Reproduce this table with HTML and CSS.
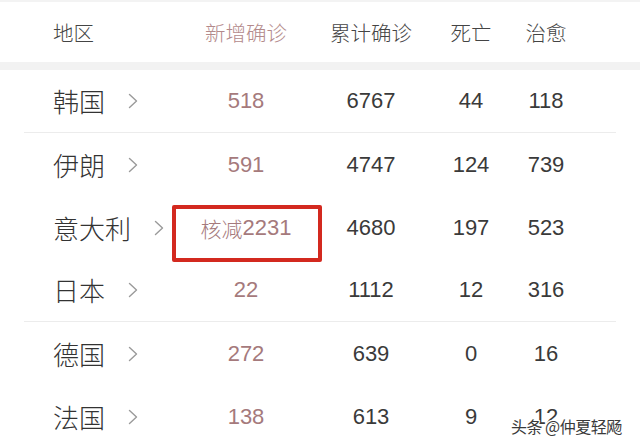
FILE: index.html
```html
<!DOCTYPE html>
<html lang="zh">
<head>
<meta charset="utf-8">
<link rel="stylesheet" href="styles.css">
</head>
<body>
<div class="page">
  <div class="head">
    <div class="c-region">地区</div>
    <div class="c-new">新增确诊</div>
    <div class="c-num">累计确诊</div>
    <div class="c-num">死亡</div>
    <div class="c-num">治愈</div>
  </div>
  <div class="band"></div>
  <div class="row line">
    <div class="c-region"><span class="name">韩国</span><svg class="chev" width="10" height="16" viewBox="0 0 10 16"><polyline points="1.5,1.5 8.5,8 1.5,14.5"/></svg></div>
    <div class="c-new num">518</div>
    <div class="c-num num">6767</div>
    <div class="c-num num">44</div>
    <div class="c-num num">118</div>
  </div>
  <div class="row">
    <div class="c-region"><span class="name">伊朗</span><svg class="chev" width="10" height="16" viewBox="0 0 10 16"><polyline points="1.5,1.5 8.5,8 1.5,14.5"/></svg></div>
    <div class="c-new num">591</div>
    <div class="c-num num">4747</div>
    <div class="c-num num">124</div>
    <div class="c-num num">739</div>
  </div>
  <div class="row">
    <div class="c-region"><span class="name">意大利</span><svg class="chev" width="10" height="16" viewBox="0 0 10 16"><polyline points="1.5,1.5 8.5,8 1.5,14.5"/></svg></div>
    <div class="c-new num marked"><span class="cjk">核减</span>2231<span class="redbox"></span></div>
    <div class="c-num num">4680</div>
    <div class="c-num num">197</div>
    <div class="c-num num">523</div>
  </div>
  <div class="row line">
    <div class="c-region"><span class="name">日本</span><svg class="chev" width="10" height="16" viewBox="0 0 10 16"><polyline points="1.5,1.5 8.5,8 1.5,14.5"/></svg></div>
    <div class="c-new num">22</div>
    <div class="c-num num">1112</div>
    <div class="c-num num">12</div>
    <div class="c-num num">316</div>
  </div>
  <div class="row">
    <div class="c-region"><span class="name">德国</span><svg class="chev" width="10" height="16" viewBox="0 0 10 16"><polyline points="1.5,1.5 8.5,8 1.5,14.5"/></svg></div>
    <div class="c-new num">272</div>
    <div class="c-num num">639</div>
    <div class="c-num num">0</div>
    <div class="c-num num">16</div>
  </div>
  <div class="row">
    <div class="c-region"><span class="name">法国</span><svg class="chev" width="10" height="16" viewBox="0 0 10 16"><polyline points="1.5,1.5 8.5,8 1.5,14.5"/></svg></div>
    <div class="c-new num">138</div>
    <div class="c-num num">613</div>
    <div class="c-num num">9</div>
    <div class="c-num num">12</div>
  </div>
  <div class="watermark">头条 @仲夏轻飏</div>
</div>
</body>
</html>
```

FILE: styles.css
```css
html, body {
  margin: 0;
  padding: 0;
  background: #ffffff;
}
.page {
  position: relative;
  width: 640px;
  height: 447px;
  overflow: hidden;
  font-family: "Noto Sans CJK SC", "Liberation Sans", sans-serif;
  font-weight: 300;
  color: #333333;
}
.head, .row {
  display: grid;
  grid-template-columns: 152px 140px 110px 90px 60px 1fr;
  align-items: center;
  margin: 0 24px;
}
.head {
  height: 60px;
  border-top: 2px solid #f3f3f3;
  margin: 0;
  padding: 0 24px;
  font-size: 20.5px;
  color: #444444;
}
.head .c-new {
  color: #b38a8b;
}
.band {
  height: 8px;
  background: #f2f2f2;
}
.row {
  height: 63px;
  box-sizing: border-box;
}
.row.line {
  border-bottom: 1px solid #ececec;
}
.c-region {
  padding-left: 29px;
  display: flex;
  align-items: center;
}
.c-new, .c-num {
  text-align: center;
}
.name {
  font-size: 26px;
  color: #333333;
  line-height: 1;
}
.chev {
  margin-left: 23px;
  fill: none;
  stroke: #9a9a9a;
  stroke-width: 1.4;
  stroke-linecap: round;
  stroke-linejoin: round;
}
.num {
  font-family: "Liberation Sans", "Noto Sans CJK SC", sans-serif;
  font-weight: 400;
  font-size: 22px;
  color: #3a3a3a;
}
.row .c-new {
  color: #a57a7c;
}
.marked {
  position: relative;
  align-self: stretch;
  display: flex;
  align-items: center;
  justify-content: center;
}
.cjk {
  font-family: "Noto Sans CJK SC", sans-serif;
  font-weight: 300;
  font-size: 21px;
}
.redbox {
  position: absolute;
  left: -4px;
  right: -6px;
  top: 9px;
  height: 57px;
  box-sizing: border-box;
  border: 4px solid #d3291f;
  border-radius: 2px;
}
.watermark {
  position: absolute;
  left: 511px;
  top: 414px;
  font-size: 16px;
  font-weight: 400;
  color: #3a3a3a;
  letter-spacing: -0.5px;
  text-shadow: 1px 0 0 #fff, -1px 0 0 #fff, 0 1px 0 #fff, 0 -1px 0 #fff, 1px 1px 0 #fff, -1px -1px 0 #fff, 1px -1px 0 #fff, -1px 1px 0 #fff;
}
```
